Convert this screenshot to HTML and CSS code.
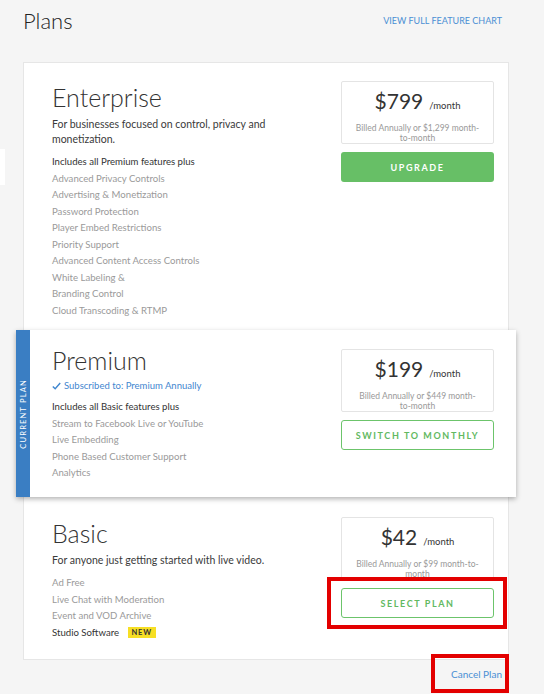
FILE: index.html
```html
<!DOCTYPE html>
<html>
<head>
<meta charset="utf-8">
<link rel="stylesheet" href="styles.css">
</head>
<body>
<div class="page">
  <div class="stray"></div>
  <header class="header">
    <h1 class="page-title">Plans</h1>
    <a class="chart-link" href="#">View full feature chart</a>
  </header>

  <div class="plans">
    <section class="plan plan-enterprise">
      <div class="plan-info">
        <h2 class="plan-name">Enterprise</h2>
        <p class="plan-desc">For businesses focused on control, privacy and monetization.</p>
        <ul class="features">
          <li class="feature feature-head">Includes all Premium features plus</li>
          <li class="feature">Advanced Privacy Controls</li>
          <li class="feature">Advertising &amp; Monetization</li>
          <li class="feature">Password Protection</li>
          <li class="feature">Player Embed Restrictions</li>
          <li class="feature">Priority Support</li>
          <li class="feature">Advanced Content Access Controls</li>
          <li class="feature">White Labeling &amp;</li>
          <li class="feature">Branding Control</li>
          <li class="feature">Cloud Transcoding &amp; RTMP</li>
        </ul>
      </div>
      <div class="price-col">
        <div class="price-box">
          <div class="price"><span class="amount">$799</span><span class="per">/month</span></div>
          <div class="billing">Billed Annually or $1,299 month-<br>to-month</div>
        </div>
        <a class="btn btn-solid" href="#">Upgrade</a>
      </div>
    </section>

    <section class="plan-current">
      <div class="current-stripe"><span class="current-label">Current Plan</span></div>
      <div class="plan plan-premium">
        <div class="plan-info">
          <h2 class="plan-name">Premium</h2>
          <div class="subscribed">
            <svg class="check" width="9" height="8" viewBox="0 0 9 8"><path d="M0.8 4.4 L3.2 6.8 L8.2 1" fill="none" stroke="#3f86cf" stroke-width="1.4"/></svg>
            Subscribed to: Premium Annually
          </div>
          <ul class="features">
            <li class="feature feature-head">Includes all Basic features plus</li>
            <li class="feature">Stream to Facebook Live or YouTube</li>
            <li class="feature">Live Embedding</li>
            <li class="feature">Phone Based Customer Support</li>
            <li class="feature">Analytics</li>
          </ul>
        </div>
        <div class="price-col">
          <div class="price-box">
            <div class="price"><span class="amount">$199</span><span class="per">/month</span></div>
            <div class="billing">Billed Annually or $449 month-<br>to-month</div>
          </div>
          <a class="btn btn-outline" href="#">Switch to monthly</a>
        </div>
      </div>
    </section>

    <section class="plan plan-basic">
      <div class="plan-info">
        <h2 class="plan-name">Basic</h2>
        <p class="plan-desc">For anyone just getting started with live video.</p>
        <ul class="features features-basic">
          <li class="feature">Ad Free</li>
          <li class="feature">Live Chat with Moderation</li>
          <li class="feature">Event and VOD Archive</li>
          <li class="feature feature-head">Studio Software <span class="badge">NEW</span></li>
        </ul>
      </div>
      <div class="price-col">
        <div class="price-box">
          <div class="price"><span class="amount">$42</span><span class="per">/month</span></div>
          <div class="billing">Billed Annually or $99 month-to-<br>month</div>
        </div>
        <div class="highlight-wrap">
          <a class="btn btn-outline" href="#">Select plan</a>
          <span class="highlight highlight-select"></span>
        </div>
      </div>
    </section>
  </div>

  <footer class="footer">
    <a class="cancel-link" href="#">Cancel Plan<span class="highlight highlight-cancel"></span></a>
  </footer>
</div>
</body>
</html>
```

FILE: styles.css
```css
* { box-sizing: border-box; }
html, body { margin: 0; padding: 0; }
body {
  background: #f5f5f5;
  font-family: Lato, "Open Sans", "Liberation Sans", sans-serif;
  color: #333;
  width: 544px;
  height: 694px;
  overflow: hidden;
}
.page {
  position: relative;
  padding: 0 35px 0 23px;
}
.stray {
  position: absolute;
  left: 0;
  top: 149px;
  width: 5px;
  height: 36px;
  background: #fff;
}
.header {
  display: flex;
  justify-content: space-between;
  align-items: flex-start;
  height: 62px;
  padding-right: 7px;
}
.page-title {
  margin: 8px 0 0 0;
  font-size: 22px;
  line-height: 26px;
  font-weight: 300;
  color: #222;
}
.chart-link {
  margin-top: 15px;
  font-size: 9px;
  line-height: 12px;
  text-transform: uppercase;
  color: #4a8fd4;
  text-decoration: none;
  font-weight: 400;
}
.plans {
  background: #fff;
  border: 1px solid #e6e6e6;
}
.plan {
  display: flex;
  justify-content: space-between;
  align-items: flex-start;
}
.plan-enterprise { padding: 18px 14px 11px 28px; }
.plan-basic { padding: 20px 14px 18px 28px; }
.plan-info { flex: 1; }
.plan-name {
  margin: 0;
  font-size: 25px;
  line-height: 32px;
  font-weight: 300;
  color: #333;
}
.plan-desc {
  margin: 3px 0 0 0;
  width: 230px;
  font-size: 10.5px;
  line-height: 15px;
  color: #3a3a3a;
}
.plan-enterprise .plan-desc { margin-top: 4px; }
.plan-basic .plan-desc { margin-top: 4px; }
.features {
  list-style: none;
  margin: 7px 0 0 0;
  padding: 0;
}
.feature {
  font-size: 9.6px;
  line-height: 16.5px;
  color: #9a9a9a;
}
.feature-head { color: #333; }
.badge {
  display: inline-block;
  margin-left: 6px;
  padding: 0 4px;
  background: #f7df24;
  color: #333;
  font-size: 7.5px;
  line-height: 11px;
  font-weight: 700;
  letter-spacing: 0.8px;
  vertical-align: 1px;
}
.price-col {
  width: 153px;
  flex: none;
}
.price-box {
  height: 63px;
  border: 1px solid #e4e4e4;
  border-radius: 2px;
  text-align: center;
  padding-top: 6px;
}
.price {
  line-height: 26px;
  color: #333;
}
.amount {
  font-size: 21px;
  font-weight: 400;
}
.per {
  font-size: 9.5px;
  margin-left: 6px;
}
.billing {
  margin-top: 4px;
  font-size: 8.5px;
  line-height: 10px;
  color: #999;
}
.btn {
  display: flex;
  align-items: center;
  justify-content: center;
  margin-top: 8px;
  height: 30px;
  border-radius: 3px;
  font-size: 9px;
  font-weight: 700;
  letter-spacing: 1.6px;
  text-transform: uppercase;
  text-decoration: none;
}
.btn-solid {
  background: #67bf66;
  color: #fff;
}
.btn-outline {
  border: 1px solid #6cc46b;
  color: #62b961;
  background: #fff;
}
.plan-current {
  display: flex;
  margin: 0 -8px;
  background: #fff;
  box-shadow: 0 2px 5px rgba(0,0,0,0.3);
  height: 167px;
}
.current-stripe {
  width: 14px;
  flex: none;
  background: #3a7ec3;
  display: flex;
  align-items: center;
  justify-content: center;
}
.current-label {
  writing-mode: vertical-rl;
  transform: rotate(180deg);
  color: #fff;
  font-size: 7.5px;
  letter-spacing: 1.2px;
  text-transform: uppercase;
  white-space: nowrap;
}
.plan-premium {
  flex: 1;
  padding: 15px 22px 0 22px;
}
.plan-premium .plan-name { line-height: 30px; }
.subscribed {
  display: flex;
  align-items: center;
  gap: 3px;
  margin-top: 3px;
  font-size: 9.5px;
  line-height: 15px;
  color: #3f86cf;
}
.plan-premium .price-col { margin-top: 4px; }
.plan-premium .features { margin-top: 6px; }
.features-basic { margin-top: 7px; }
.highlight-wrap { position: relative; }
.highlight {
  position: absolute;
  border: 4px solid #e30000;
  pointer-events: none;
}
.highlight-select {
  left: -14px;
  top: -11px;
  right: -13px;
  bottom: -11px;
}
.footer {
  display: flex;
  justify-content: flex-end;
  padding: 7px 7px 0 0;
}
.cancel-link {
  position: relative;
  font-size: 10px;
  line-height: 14px;
  color: #4a8fd4;
  text-decoration: none;
}
.highlight-cancel {
  left: -20px;
  top: -13px;
  right: -7px;
  bottom: -12px;
}
```
